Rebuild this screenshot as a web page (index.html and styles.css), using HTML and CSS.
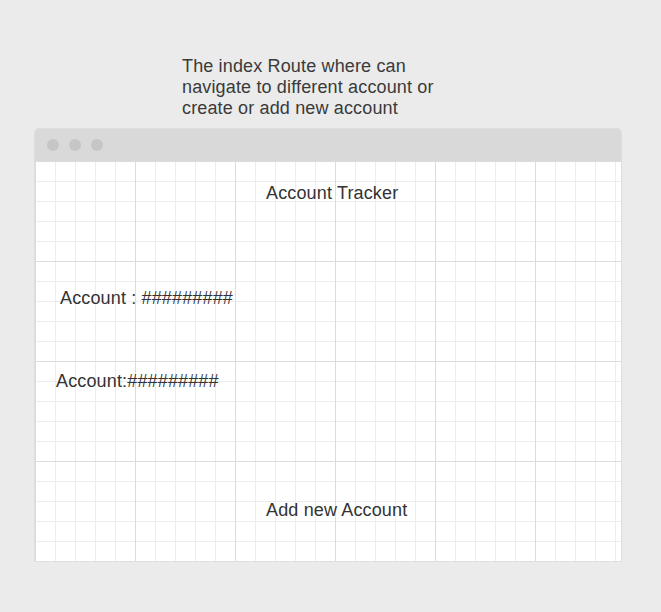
FILE: index.html
```html
<!DOCTYPE html>
<html>
<head>
<meta charset="utf-8">
<link rel="stylesheet" href="styles.css">
</head>
<body>
<div class="page">
  <p class="note">The index Route where can<br>navigate to different account or<br>create or add new account</p>
  <div class="window">
    <div class="titlebar">
      <span class="dot"></span><span class="dot"></span><span class="dot"></span>
    </div>
    <div class="canvas">
      <div class="row r1"><span class="label">Account Tracker</span></div>
      <div class="row r2"><span class="label">Account : #########</span></div>
      <div class="row r3"><span class="label">Account:#########</span></div>
      <div class="row r4"><span class="label">Add new Account</span></div>
    </div>
  </div>
</div>
</body>
</html>
```

FILE: styles.css
```css
html, body {
  margin: 0;
  padding: 0;
  background: #ebebeb;
  font-family: "Liberation Sans", Arial, sans-serif;
  color: #333333;
}
.page {
  padding-top: 56px;
  width: 661px;
  height: 612px;
  box-sizing: border-box;
}
.note {
  margin: 0 0 0 182px;
  font-size: 18px;
  line-height: 21px;
  letter-spacing: 0.15px;
  color: #3a3a3a;
}
.window {
  margin: 9px 0 0 34px;
  width: 588px;
  box-sizing: border-box;
  border: 1px solid #dedede;
  border-radius: 4px 4px 0 0;
  overflow: hidden;
  background: #ffffff;
}
.titlebar {
  height: 32px;
  background: #d9d9d9;
  display: flex;
  align-items: center;
  gap: 10px;
  padding-left: 12px;
}
.dot {
  width: 12px;
  height: 12px;
  border-radius: 50%;
  background: #c6c6c6;
}
.canvas {
  height: 400px;
  background-color: #ffffff;
  background-image:
    linear-gradient(to right, #dcdcdc 1px, transparent 1px),
    linear-gradient(to bottom, #dcdcdc 1px, transparent 1px),
    linear-gradient(to right, #ededed 1px, transparent 1px),
    linear-gradient(to bottom, #ededed 1px, transparent 1px);
  background-size: 100px 100px, 100px 100px, 20px 20px, 20px 20px;
  display: flex;
  flex-direction: column;
}
.row {
  height: 100px;
  box-sizing: border-box;
}
.label {
  font-size: 18px;
  line-height: 21px;
  letter-spacing: 0.15px;
  white-space: nowrap;
}
.r1 { padding: 22px 0 0 231px; }
.r2 { padding: 27px 0 0 25px; }
.r3 { padding: 10px 0 0 21px; }
.r4 { padding: 39px 0 0 231px; }
```
